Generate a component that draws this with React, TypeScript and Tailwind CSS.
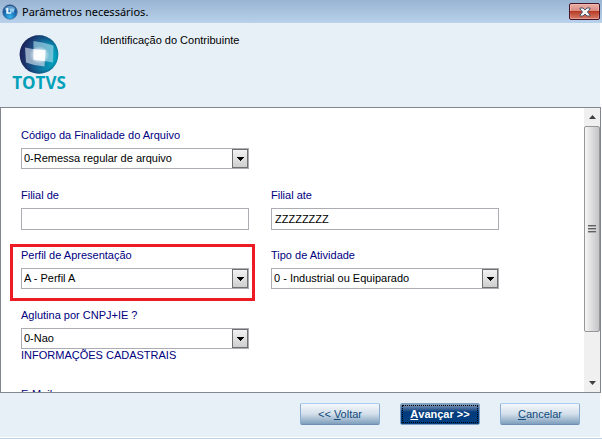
import React, { useState } from 'react';

const labelClass = 'flex h-4 items-center text-[11px] leading-4 text-[#000080]';

interface FieldProps {
  id: string;
  label: string;
  value: string;
}

function SelectField({ id, label, value }: FieldProps) {
  return (
    <div>
      <label htmlFor={id} className={labelClass}>{label}</label>
      <div className="relative mt-[5px] h-[21px]">
        <select
          id={id}
          defaultValue={value}
          className="block h-full w-full appearance-none border border-[#abadb3] bg-white pb-px pl-[2px] text-[11px] leading-4 text-black outline-none"
        >
          <option>{value}</option>
        </select>
        <span className="pointer-events-none absolute top-px right-px flex h-[19px] w-4 items-center justify-center border border-[#707070] bg-linear-to-b from-[#f2f2f2] to-[#cfcfcf]">
          <svg width="7" height="4" viewBox="0 0 7 4" shapeRendering="crispEdges">
            <path d="M0 0h7v1H6v1H5v1H4v1H3V3H2V2H1V1H0z" fill="#000" />
          </svg>
        </span>
      </div>
    </div>
  );
}

function TextField({ id, label, value }: FieldProps) {
  const [text, setText] = useState(value);

  return (
    <div>
      <label htmlFor={id} className={labelClass}>{label}</label>
      <input
        id={id}
        type="text"
        value={text}
        onChange={(e) => setText(e.target.value)}
        className="mt-[5px] block h-[22px] w-full border border-[#abadb3] bg-white px-[3px] text-[11px] leading-4 text-black outline-none"
      />
    </div>
  );
}

function AppIcon() {
  return (
    <svg className="h-4 w-4" viewBox="0 0 16 16">
      <defs>
        <radialGradient id="appBall" cx="0.5" cy="0.85" r="0.8">
          <stop offset="0" stopColor="#35b4ec" />
          <stop offset="0.5" stopColor="#1a72b8" />
          <stop offset="1" stopColor="#12407c" />
        </radialGradient>
      </defs>
      <circle cx="8" cy="8" r="7.3" fill="url(#appBall)" stroke="#4a6a94" strokeWidth="0.6" />
      <path d="M2.500 5a6.300 6.300 0 0 1 11 0l-.8 1.500H3.300z" fill="#8fcbee" opacity="0.6" />
      <path d="M4.300 4h2v4.200h3v1.600h-5z" fill="#e8f6fd" />
      <path d="M8 4.600h4v3.800H8z" fill="#a5d8f4" opacity="0.8" />
    </svg>
  );
}

function BrandLogo() {
  return (
    <div className="flex w-[54px] flex-col items-center">
      <svg className="h-10 w-10" viewBox="0 0 40 40">
        <defs>
          <linearGradient id="logoBall" x1="0" y1="0.4" x2="1" y2="0.6">
            <stop offset="0" stopColor="#24215c" />
            <stop offset="0.4" stopColor="#17568a" />
            <stop offset="1" stopColor="#00b0c8" />
          </linearGradient>
          <radialGradient id="logoShade" cx="0.54" cy="0.52" r="0.54">
            <stop offset="0.7" stopColor="#15245a" stopOpacity="0" />
            <stop offset="1" stopColor="#15245a" stopOpacity="0.65" />
          </radialGradient>
          <radialGradient id="logoGlow" cx="0.5" cy="0.5" r="0.5">
            <stop offset="0" stopColor="#fff" />
            <stop offset="0.5" stopColor="#fff" stopOpacity="0.6" />
            <stop offset="1" stopColor="#fff" stopOpacity="0" />
          </radialGradient>
        </defs>
        <circle cx="20" cy="19.500" r="19.300" fill="url(#logoBall)" />
        <circle cx="20" cy="19.500" r="19.300" fill="url(#logoShade)" />
        <path d="M14.500 6Q25 7 34.500 10.500L34 27.500Q25 25.500 14.500 25z" fill="#a8d8ea" opacity="0.65" />
        <path d="M6 12.500Q16 15 26.500 15L25.500 31.500Q16 31 7 27.500z" fill="#d3dfec" opacity="0.65" />
        <path d="M14.500 14.300L26.500 15L26 26L14.500 25z" fill="#fff" opacity="0.85" />
        <ellipse cx="20.500" cy="20" rx="10" ry="9" fill="url(#logoGlow)" />
      </svg>
      <span className="font-['Open_Sans','Noto_Sans',sans-serif] text-[17px] leading-4 font-bold text-[#00a0b8]">TOTVS</span>
    </div>
  );
}

function ScrollBar() {
  return (
    <div className="flex w-4 shrink-0 flex-col bg-[#f0f0f0]" aria-hidden="true">
      <div className="flex h-[18px] items-center justify-center">
        <svg width="7" height="4" viewBox="0 0 7 4"><path d="M3.500 0 7 4H0z" fill="#404040" /></svg>
      </div>
      <div className="flex h-[206px] items-center justify-center rounded-xs border border-[#979797] bg-linear-to-r from-[#f5f5f5] via-[#dcdcde] to-[#c4c4c8]">
        <svg width="8" height="8" viewBox="0 0 8 8" shapeRendering="crispEdges">
          <path d="M0 0h8v1H0zM0 3h8v1H0zM0 6h8v1H0z" fill="#606060" />
          <path d="M0 1h8v1H0zM0 4h8v1H0zM0 7h8v1H0z" fill="#aaa" />
        </svg>
      </div>
      <div className="mt-auto flex h-[18px] items-center justify-center">
        <svg width="7" height="4" viewBox="0 0 7 4"><path d="M0 0h7L3.500 4z" fill="#404040" /></svg>
      </div>
    </div>
  );
}

const plainButton =
  'h-[22px] w-20 rounded-xs border border-[#8badd0] border-t-[#a8ccf4] border-b-[#6c8fb3] bg-linear-to-b from-[#f4f8fc] via-[#d3dfea] to-[#7f9fbd] text-[11px] leading-4 text-[#0f4a7c]';

export default function App() {
  return (
    <div className="w-full border-b border-[#b9d1ea] bg-white pb-px font-['Liberation_Sans',Arial,sans-serif] text-[11px] text-black">
      {/* Title bar */}
      <header className="flex h-[23px] items-center bg-linear-to-b from-[#98b4d2] to-[#b9d1ea] pr-[2px] pl-[2px]">
        <AppIcon />
        <h1 className="ml-1 font-['Noto_Sans','Open_Sans',sans-serif] text-[11px] leading-4 text-black">Parâmetros necessários.</h1>
        <button
          type="button"
          aria-label="Fechar"
          className="ml-auto flex h-[17px] w-[31px] items-center justify-center rounded-xs border border-[#47152b] bg-linear-to-b from-[#eab0a8] from-0% via-[#d98a80] via-48% to-[#d3765f] to-100% inset-ring inset-ring-[#f0b9b0]/70"
        >
          <span className="flex h-full w-full items-center justify-center bg-linear-to-b from-transparent from-50% via-[#b93a22] via-50% to-transparent">
            <svg width="12" height="10" viewBox="0 0 12 10">
              <path d="M1 1h3l2 2 2-2h3v1L8.500 5 11 8v1H8L6 7 4 9H1V8l2.500-3L1 2z" fill="#f5f5f5" stroke="#4b5268" />
            </svg>
          </span>
        </button>
      </header>

      <div className="mr-[2px] bg-[#e8f0f7]">
        {/* Step heading */}
        <div className="flex h-[84px] items-start pt-[9px] pl-3">
          <div className="pt-[3px]">
            <BrandLogo />
          </div>
          <h2 className="ml-[34px] text-[11px] leading-4">Identificação do Contribuinte</h2>
        </div>

        {/* Scrolled form area */}
        <main className="-mr-px flex h-[286px] overflow-hidden border border-[#828790] bg-white">
          <form className="min-w-0 flex-1 pt-[19px] pl-5">
            <div className="grid grid-cols-[228px_228px] gap-x-[22px]">
              <div className="h-[60px]">
                <SelectField id="finalidade" label="Código da Finalidade do Arquivo" value="0-Remessa regular de arquivo" />
              </div>
              <div />
              <div className="h-[60px]">
                <TextField id="filialDe" label="Filial de" value="" />
              </div>
              <div className="h-[60px]">
                <TextField id="filialAte" label="Filial ate" value="ZZZZZZZZ" />
              </div>
              <div className="relative h-[60px]">
                <SelectField id="perfil" label="Perfil de Apresentação" value="A - Perfil A" />
                <div className="pointer-events-none absolute -top-[3px] -right-1.5 -left-[11px] h-[57px] border-3 border-[#ed1c24]" />
              </div>
              <div className="h-[60px]">
                <SelectField id="atividade" label="Tipo de Atividade" value="0 - Industrial ou Equiparado" />
              </div>
              <SelectField id="aglutina" label="Aglutina por CNPJ+IE ?" value="0-Nao" />
            </div>
            <p className="text-[11px] leading-3 text-[#000080]">INFORMAÇÕES CADASTRAIS</p>
            <label htmlFor="email" className="mt-[25px] block text-[11px] leading-4 text-[#000080]">E-Mail</label>
            <input id="email" type="text" className="block h-[22px] w-[228px] border border-[#abadb3]" />
          </form>
          <ScrollBar />
        </main>

        {/* Wizard buttons */}
        <footer className="flex h-11 items-start justify-end gap-5 pt-[10px] pr-5">
          <button type="button" className={plainButton}>&lt;&lt; <u>V</u>oltar</button>
          <button
            type="button"
            className="h-[22px] w-20 rounded-xs border border-[#7f9fc3] bg-linear-to-b from-[#8ba4bd] from-0% via-[#003b7c] via-40% to-[#003f80] p-px text-[11px] leading-4 font-bold text-white"
          >
            <span className="flex h-full items-center justify-center border border-dotted border-black"><u>A</u>vançar &gt;&gt;</span>
          </button>
          <button type="button" className={plainButton}><u>C</u>ancelar</button>
        </footer>
      </div>
    </div>
  );
}
